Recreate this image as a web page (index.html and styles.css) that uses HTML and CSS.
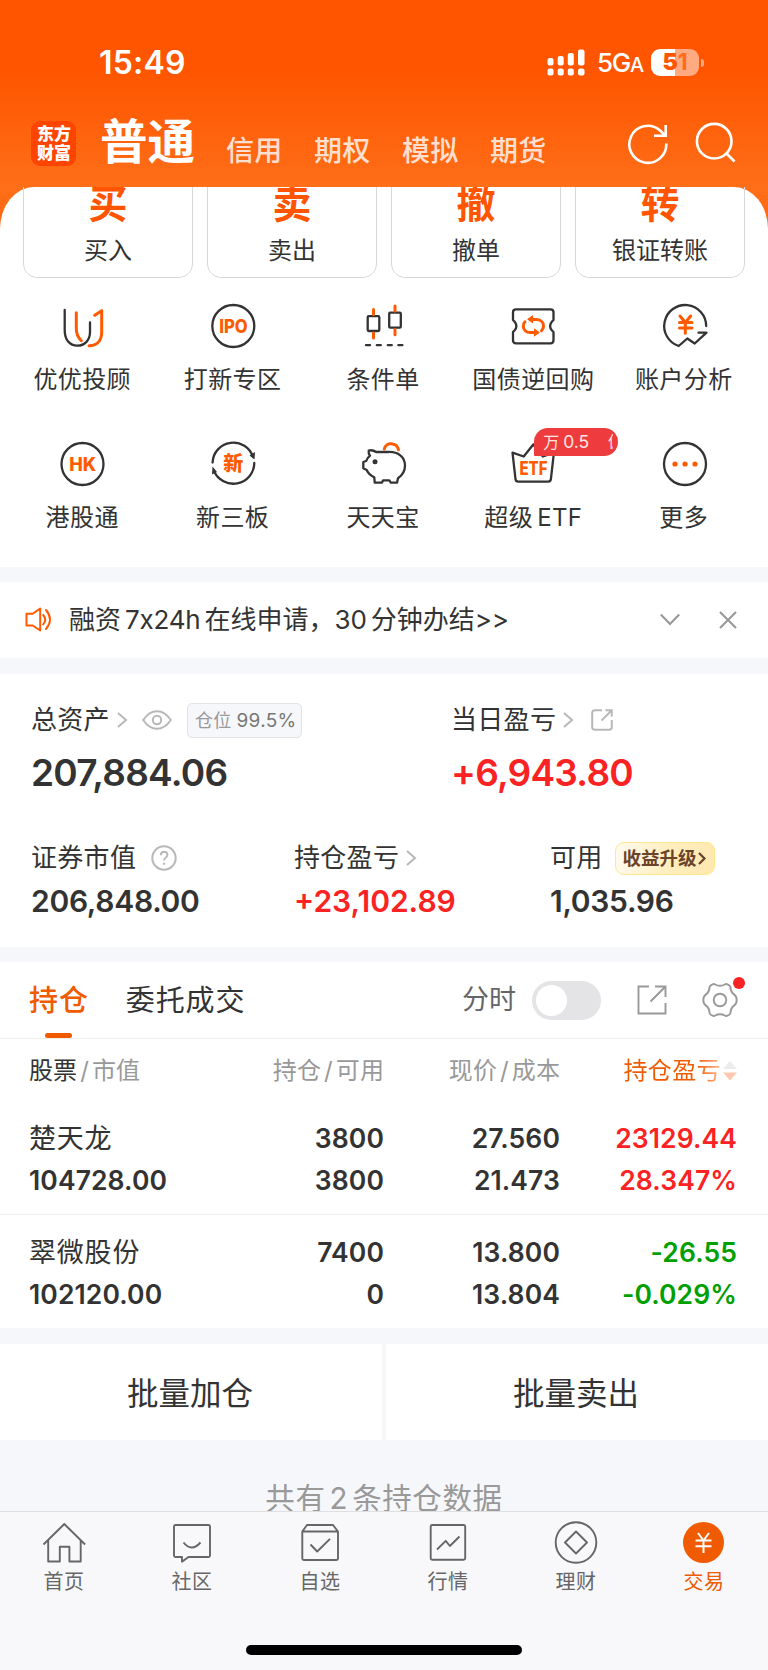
FILE: index.html
```html
<!DOCTYPE html>
<html lang="zh-CN">
<head>
    <meta charset="UTF-8">
    <meta name="viewport" content="width=device-width, initial-scale=1.0">
    <title>东方财富 - 交易</title>
    <link rel="stylesheet" href="styles.css">
</head>
<body>

<div class="app">
    <!-- Status bar and account tabs -->
    <header class="header">
        <div class="status">
            <span class="time">15:49</span>
            <svg class="signal" width="38" height="27" viewBox="0 0 38 27" fill="#fff">
                <rect x="0.5" y="9" width="6" height="7.500" rx="2"/><rect x="10.700" y="7" width="6" height="9.500" rx="2"/>
                <rect x="20.800" y="4" width="6" height="12.500" rx="2"/><rect x="31" y="0.500" width="6.500" height="16" rx="2"/>
                <rect x="0.500" y="19.500" width="6" height="7" rx="2"/><rect x="10.700" y="19.500" width="6" height="7" rx="2"/>
                <rect x="20.800" y="19.500" width="6" height="7" rx="2"/><rect x="31" y="19.500" width="6.500" height="7" rx="2"/>
            </svg>
            <span class="network">5G<small>A</small></span>
            <span class="battery"><b>5</b><i>1</i></span>
            <span class="battery-tip"></span>
        </div>
        <nav class="accounts">
            <div class="logo">东方<br>财富</div>
            <span class="account active">普通</span>
            <span class="account">信用</span>
            <span class="account">期权</span>
            <span class="account">模拟</span>
            <span class="account">期货</span>
            <svg class="refresh" width="42" height="42" viewBox="0 0 42 42" fill="none" stroke="#fff" stroke-width="2.600">
                <path d="M39.300 20.500A18.500 18.500 0 1 1 32.500 7L38 12.200M38.700 2v10.800H27"/>
            </svg>
            <svg class="search" width="42" height="42" viewBox="0 0 42 42" fill="none" stroke="#fff" stroke-width="2.600">
                <circle cx="19.200" cy="19.200" r="17.300"/><path d="M31 31l8.500 8.500"/>
            </svg>
        </nav>
    </header>

    <!-- Trade shortcuts -->
    <section class="panel">
        <div class="actions">
            <div class="action"><b>买</b><span>买入</span></div>
            <div class="action"><b>卖</b><span>卖出</span></div>
            <div class="action"><b>撤</b><span>撤单</span></div>
            <div class="action"><b>转</b><span>银证转账</span></div>
        </div>
        <div class="shortcuts">
            <div class="shortcut">
                <svg class="icon" viewBox="0 0 48 48">
                    <path d="M6.700 8v20c0 10 5 15.700 12.600 15.700S32 38 32 30V20.300"/>
                    <path class="hot" d="M18.300 10.700V26c0 6 1.500 9.500 5 12.700M36.700 13.300l7-4.600V30c0 9-5 13.700-12.700 13.700"/>
                </svg>
                <span>优优投顾</span>
            </div>
            <div class="shortcut">
                <svg class="icon" viewBox="0 0 48 48">
                    <circle cx="24.300" cy="24" r="21"/>
                    <text x="24.500" y="30.800" textLength="28.500" lengthAdjust="spacingAndGlyphs">IPO</text>
                </svg>
                <span>打新专区</span>
            </div>
            <div class="shortcut">
                <svg class="icon" viewBox="0 0 48 48">
                    <rect x="8.700" y="14.200" width="11.600" height="14.800" rx="1"/><rect x="30.200" y="10.700" width="11.600" height="15" rx="1"/>
                    <path class="hot" d="M14.500 7.500v5M14.500 31v5M36 4v5M36 27.800v5"/>
                    <path d="M7 43.200h4M17.800 43.200h4M28.800 43.200h4M39.400 43.200h4"/>
                </svg>
                <span>条件单</span>
            </div>
            <div class="shortcut">
                <svg class="icon" viewBox="0 0 48 48">
                    <path d="M7 7.300h34.500q3 0 3 3V18l-1.500 1.500q-3.800 4.500 0 9l1.500 1.500v8.300q0 3-3 3H7q-3 0-3-3V30l1.500-1.500q3.800-4.500 0-9L4 18v-7.700q0-3 3-3z"/>
                    <path class="hot" d="M22 17.500h5c4.500 0 7.500 2.800 7.500 6.500 0 2-.7 3.500-2 4.800M16 19.800c-1.200 1.200-1.700 2.700-1.700 4.500 0 3.700 3 6.200 7 6.200H27"/>
                    <path class="arrow" d="M18 17.300l6-4.300v8.600zM31 30.500l-6-4.300v8.600z"/>
                </svg>
                <span>国债逆回购</span>
            </div>
            <div class="shortcut">
                <svg class="icon" viewBox="0 0 48 48">
                    <path d="M46.200 24A21 21 0 1 0 18.700 44l8.600-7.500 7.400 5L46.500 30.700h-8"/>
                    <path class="hot" d="M20 14l5.300 6.500L30.700 14M19.500 20.600H32M19.500 26H32M25.300 20.500v10.800"/>
                </svg>
                <span>账户分析</span>
            </div>
            <div class="shortcut">
                <svg class="icon" viewBox="0 0 48 48">
                    <circle cx="24.500" cy="24" r="21"/>
                    <text x="24.700" y="30.800" textLength="27" lengthAdjust="spacingAndGlyphs">HK</text>
                </svg>
                <span>港股通</span>
            </div>
            <div class="shortcut">
                <svg class="icon" viewBox="0 0 48 48">
                    <path d="M3.600 22.500A20.700 20.700 0 0 1 44 17M45.300 23A21 21 0 0 1 5 31"/>
                    <path class="arrow-dark" d="M40.500 15.500l5 4 .5-7.500zM8 32l-5 2.500.5-8z"/>
                    <text x="24.300" y="31" class="cjk">新</text>
                </svg>
                <span>新三板</span>
            </div>
            <div class="shortcut">
                <svg class="icon" viewBox="0 0 48 48">
                    <path d="M4.300 22l2.900-1q1-3 3.800-5.300-1.800-2.200-1.300-5.200 4-.9 7.500 1.500h12C39 11.500 46 17 46 25.500c0 6-3 10-7 12.700l-.9 4.400h-6.300l-1.500-2.200H24l-1 2.200h-7.300l-.4-5.300C11.500 35.500 9 33 7.700 30l-3.400-1.700z"/>
                    <circle class="dot-dark" cx="16" cy="21.700" r="2.500"/>
                    <path class="hot" d="M25.300 9c1.500-7.500 12.500-6.500 14.200.8"/>
                </svg>
                <span>天天宝</span>
            </div>
            <div class="shortcut">
                <svg class="icon" viewBox="0 0 48 48">
                    <path d="M3.500 12.700l11.200 3.800 9.600-12 9.600 12 11-3.800-3 26.500q-.3 2.500-2.800 2.500H9.300q-2.500 0-2.800-2.500z"/>
                    <text x="24.500" y="35.300" textLength="28" lengthAdjust="spacingAndGlyphs">ETF</text>
                </svg>
                <span>超级<em>ETF</em></span>
                <div class="promo">万<em>0.5</em><i>佣</i></div>
            </div>
            <div class="shortcut">
                <svg class="icon" viewBox="0 0 48 48">
                    <circle cx="25" cy="24" r="21"/>
                    <g class="arrow"><circle cx="15" cy="24" r="2.600"/><circle cx="25" cy="24" r="2.600"/><circle cx="35" cy="24" r="2.600"/></g>
                </svg>
                <span>更多</span>
            </div>
        </div>
    </section>

    <!-- Notice -->
    <section class="notice">
        <svg class="speaker" width="30" height="30" viewBox="0 0 30 30" fill="none" stroke="#ff5a00" stroke-width="2" stroke-linejoin="round" stroke-linecap="round">
            <path d="M2.500 8.800h6.200L16.200 3.500v22l-7.500-5H2.500zM19.200 10q4 4.700 0 9.400M22 5q8 9.500 0 19"/>
        </svg>
        <p>融资<em>7x24h</em>在线申请，<em class="after">30</em>分钟办结&gt;&gt;</p>
        <svg class="down" width="20" height="14" viewBox="0 0 20 14" fill="none" stroke="#999" stroke-width="2.100"><path d="M.8 1.500L10 11 19.200 1.500"/></svg>
        <svg class="close" width="18" height="18" viewBox="0 0 18 18" fill="none" stroke="#999" stroke-width="2.100"><path d="M1 1l16 16M17 1L1 17"/></svg>
    </section>

    <!-- Assets -->
    <section class="assets">
        <div class="totals">
            <div class="total">
                <div class="label">总资产
                    <svg class="chevron" viewBox="0 0 10 16"><path d="M1 1l8 7-8 7"/></svg>
                    <svg class="eye" viewBox="0 0 30 20"><path d="M1.200 10Q7 1.200 15 1.200T28.800 10Q23 18.800 15 18.800T1.200 10z"/><circle cx="15" cy="10" r="4.200"/></svg>
                    <span class="ratio">仓位<em>99.5%</em></span>
                </div>
                <div class="amount">207,884.06</div>
            </div>
            <div class="total">
                <div class="label">当日盈亏
                    <svg class="chevron" viewBox="0 0 10 16"><path d="M1 1l8 7-8 7"/></svg>
                    <svg class="share" viewBox="0 0 22 22"><path d="M11 1.200H4Q1.200 1.200 1.200 4v14q0 2.800 2.800 2.800h14q2.800 0 2.800-2.800v-7M14.500 1.200h6.300v6.300M20.500 1.500L10.500 11.500"/></svg>
                </div>
                <div class="amount up">+6,943.80</div>
            </div>
        </div>
        <div class="details">
            <div class="detail">
                <div class="label">证券市值
                    <svg class="help" viewBox="0 0 26 26"><circle cx="13" cy="13" r="11.700"/><path d="M9.800 10.300q0-3.500 3.300-3.500t3.300 3q0 1.600-1.700 2.700-1.600 1.100-1.600 3"/><circle class="point" cx="13" cy="18.700" r="0.800"/></svg>
                </div>
                <div class="value">206,848.00</div>
            </div>
            <div class="detail">
                <div class="label">持仓盈亏
                    <svg class="chevron" viewBox="0 0 10 16"><path d="M1 1l8 7-8 7"/></svg>
                </div>
                <div class="value up">+23,102.89</div>
            </div>
            <div class="detail">
                <div class="label">可用
                    <span class="upgrade">收益升级<svg viewBox="0 0 8 13"><path d="M1 1l5.500 5.500L1 12"/></svg></span>
                </div>
                <div class="value">1,035.96</div>
            </div>
        </div>
    </section>

    <!-- Positions -->
    <section class="positions">
        <div class="tabs">
            <span class="tab active">持仓</span>
            <span class="tab">委托成交</span>
            <span class="minute">分时</span>
            <span class="toggle"></span>
            <svg class="export" width="30" height="30" viewBox="0 0 30 30" fill="none" stroke="#999" stroke-width="1.900"><path d="M12 1.500H1.500v27h27V18M18 1.500h10.500V12M28 2L13.500 16.500"/></svg>
            <div class="settings">
                <svg width="36" height="36" viewBox="0 0 36 36" fill="none" stroke="#999" stroke-width="1.900" stroke-linejoin="round">
                    <path d="M10.500 2.300q1.500-.8 2.700.2 4.800 2.600 9.600 0 1.200-1 2.700-.2 2.600 1.200 2.900 2.600.3 5.300 3.600 7.500 2.700 1.800 2.700 5.600t-2.700 5.600q-3.300 2.200-3.600 7.500-.3 1.400-2.900 2.600-1.500.8-2.700-.2-4.800-2.600-9.600 0-1.200 1-2.700.2-2.600-1.200-2.900-2.600-.3-5.300-3.600-7.500Q1.300 21.800 1.300 18T4 12.400q3.300-2.200 3.600-7.500.3-1.400 2.900-2.600z"/>
                    <circle cx="18" cy="18" r="6.300"/>
                </svg>
                <i class="dot"></i>
            </div>
        </div>
        <div class="row head">
            <div><b>股票</b><s>/</s>市值</div>
            <div>持仓<s>/</s>可用</div>
            <div>现价<s>/</s>成本</div>
            <div class="sort"><span>持仓盈亏</span><svg width="14" height="20" viewBox="0 0 14 20"><path d="M7 0l7 8H0z" fill="#ececec"/><path d="M0 11.500h14l-7 8z" fill="#ffc8ae"/></svg></div>
        </div>
        <div class="row">
            <div><span class="name">楚天龙</span><br>104728.00</div>
            <div>3800<br>3800</div>
            <div>27.560<br>21.473</div>
            <div class="up">23129.44<br>28.347%</div>
        </div>
        <div class="row">
            <div><span class="name">翠微股份</span><br>102120.00</div>
            <div>7400<br>0</div>
            <div>13.800<br>13.804</div>
            <div class="fall">-26.55<br>-0.029%</div>
        </div>
    </section>

    <div class="batch">
        <button type="button">批量加仓</button>
        <button type="button">批量卖出</button>
    </div>

    <p class="count">共有<em>2</em>条持仓数据</p>

    <!-- Bottom navigation -->
    <nav class="tabbar">
        <div class="item">
            <svg viewBox="0 0 44 44"><path d="M1.500 22.500L22.300 2l20.800 20.500M6.200 18.500v21h11.600V24.800h9.600v14.700h11.300v-21"/></svg>
            <span>首页</span>
        </div>
        <div class="item">
            <svg viewBox="0 0 44 44"><path d="M5.500 3h33q1.500 0 1.500 1.500v29q0 1.500-1.500 1.500H18.500l-6.500 4.800V35H5.500Q4 35 4 33.500v-29Q4 3 5.500 3zM13.500 20.500q8 10 17 0"/></svg>
            <span>社区</span>
        </div>
        <div class="item">
            <svg viewBox="0 0 44 44"><path d="M4.300 9.500L9 3h26l5 6.500v27q0 1.500-1.500 1.500H5.800q-1.500 0-1.500-1.500zM4.300 9.500H40M12.500 22.500l6.700 7L32 16.800"/></svg>
            <span>自选</span>
        </div>
        <div class="item">
            <svg viewBox="0 0 44 44"><rect x="4.700" y="3" width="34.500" height="34.700" rx="1.500"/><path d="M11 27.500l8.700-8.700 4.200 5.200 9.600-9.500"/></svg>
            <span>行情</span>
        </div>
        <div class="item">
            <svg viewBox="0 0 44 44"><circle cx="22" cy="20.500" r="20.300"/><path d="M22 9.500l11 11-11 11-11-11z"/></svg>
            <span>理财</span>
        </div>
        <div class="item active">
            <svg viewBox="0 0 44 44"><circle class="disc" cx="21.500" cy="20.500" r="20.500"/><path d="M16 11l5.500 7.500L27 11M13.500 18.500h16M13.500 24.300h16M21.500 18.500V31"/></svg>
            <span>交易</span>
        </div>
        <div class="home-indicator"></div>
    </nav>
</div>

</body>
</html>
```
FILE: styles.css
```css
* {
    box-sizing: border-box;
}

body {
    margin: 0;
    background: #f6f7fa;
    color: #333;
    font-family: Inter, "Noto Sans CJK SC", sans-serif;
}

svg {
    display: block;
    flex: none;
    overflow: visible;
}

em, i, s {
    font-style: normal;
    text-decoration: none;
}

p {
    margin: 0;
}

.app {
    display: flex;
    flex-direction: column;
    width: 768px;
    height: 1670px;
    overflow: hidden;
    background: linear-gradient(#ff5500 70px, #ff6e18 187px, #ff6410 240px, #f6f7fa 241px);
}

/* header */
.header {
    height: 187px;
    color: #fff;
}

.status {
    display: flex;
    align-items: center;
    height: 125px;
    padding: 0 64px 0 99px;
}

.time {
    margin-right: auto;
    font-size: 32px;
    font-weight: 600;
    letter-spacing: 0.2px;
}

.signal {
    margin-right: 12px;
}

.network {
    width: 54px;
    font-size: 26px;
    font-weight: 500;
    letter-spacing: -1.2px;
}

.network small {
    font-size: 20px;
}

.battery {
    width: 48px;
    height: 27px;
    border-radius: 9px;
    background: linear-gradient(90deg, #fff 51%, #ffaa80 51%);
    font-size: 23px;
    font-weight: 700;
    line-height: 27px;
    text-align: center;
    color: #ff5500;
}

.battery i {
    color: #ff6a1c;
}

.battery-tip {
    width: 3px;
    height: 8px;
    margin-left: 2px;
    border-radius: 0 4px 4px 0;
    background: #ffaa80;
}

.accounts {
    display: flex;
    height: 62px;
    padding-left: 31px;
}

.logo {
    width: 45px;
    height: 45px;
    margin: -4px 24px 0 0;
    padding: 4px 0 0 1px;
    border-radius: 9px;
    background: #ff4400;
    font-size: 17px;
    font-weight: 900;
    line-height: 18.500px;
    text-align: center;
}

.account {
    width: 88px;
    font-size: 28px;
    font-weight: 500;
    letter-spacing: 0.300px;
    line-height: 52px;
    color: #ffe0d0;
}

.account.active {
    width: 126px;
    font-size: 47.500px;
    font-weight: 700;
    letter-spacing: 0;
    line-height: 33px;
    color: #fff;
}

.refresh {
    margin: -2px 0 0 auto;
}

.search {
    margin: -3px 31px 0 26px;
}

/* shortcuts */
.panel {
    height: 380px;
    padding: 0 23px;
    border-radius: 34px 34px 0 0 / 42px 42px 0 0;
    background: #fff;
}

.actions {
    display: flex;
    gap: 14px;
    height: 91px;
    overflow: hidden;
}

.action {
    display: flex;
    flex-direction: column;
    flex: 1;
    align-items: center;
    height: 120px;
    margin-top: -29px;
    border: 1.500px solid #d8d8d8;
    border-radius: 14px;
    color: #333;
}

.action b {
    padding-top: 25px;
    font-size: 39px;
    font-weight: 700;
    line-height: 40px;
    color: #ff5500;
}

.action span {
    padding-top: 12px;
    font-size: 24px;
    line-height: 30px;
}

.shortcuts {
    display: grid;
    grid-template-columns: repeat(5, 150.400px);
    grid-auto-rows: 137.700px;
    margin: 24px -16px 0;
}

.shortcut {
    position: relative;
    display: flex;
    flex-direction: column;
    align-items: center;
}

.shortcut span {
    margin-top: 14px;
    font-size: 24px;
    letter-spacing: 0.400px;
    line-height: 32px;
}

.shortcut span em {
    margin-left: 4px;
}

.icon {
    width: 48px;
    height: 48px;
    fill: none;
    stroke: #333;
    stroke-width: 2.300;
    stroke-linecap: round;
    stroke-linejoin: round;
}

.icon .hot {
    stroke: #ff5a00;
    stroke-width: 3;
}

.icon .arrow {
    fill: #ff5a00;
    stroke: none;
}

.icon .arrow-dark, .icon .dot-dark {
    fill: #333;
    stroke: none;
}

.icon text {
    fill: #ff5a00;
    stroke: none;
    font-size: 18.500px;
    font-weight: 800;
    text-anchor: middle;
}

.icon .cjk {
    font-size: 20px;
}

.promo {
    position: absolute;
    top: -12px;
    left: 76px;
    display: flex;
    width: 84px;
    height: 28px;
    padding-left: 9px;
    border-radius: 15px 15px 15px 1px;
    background: #ee3b3d;
    font-size: 16px;
    line-height: 28px;
    color: #ffe6e0;
}

.promo em {
    margin-left: 4px;
    font-size: 17.500px;
}

.promo i {
    width: 5px;
    margin-left: 19px;
    overflow: hidden;
    font-size: 15px;
}

/* notice */
.notice {
    display: flex;
    align-items: center;
    height: 76px;
    margin-top: 15px;
    padding: 0 31px 0 24px;
    background: #fff;
}

.notice p {
    margin-left: 15px;
    font-size: 26px;
    line-height: 76px;
}

.notice em {
    margin: 0 4px;
    letter-spacing: -0.200px;
}

.notice em.after {
    margin-left: 0;
}

.down {
    margin-left: auto;
}

.close {
    margin-left: 39px;
}

/* assets */
.assets {
    height: 273px;
    margin-top: 16px;
    padding: 26px 31px 0;
    background: #fff;
}

.totals, .details {
    display: grid;
}

.totals {
    grid-template-columns: 420px 1fr;
}

.details {
    grid-template-columns: 263px 256px 1fr;
    margin-top: 33px;
}

.label {
    display: flex;
    align-items: center;
    height: 40px;
    font-size: 26px;
    letter-spacing: 0.300px;
    line-height: 40px;
}

.label svg {
    fill: none;
    stroke: #b8b8b8;
    stroke-width: 2;
}

.chevron {
    width: 10px;
    height: 16px;
    margin-left: 7px;
}

.eye {
    width: 30px;
    height: 20px;
    margin-left: 15px;
}

.ratio {
    width: 115px;
    height: 35px;
    margin-left: 15px;
    padding-left: 7px;
    border: 1.500px solid #e2e2e4;
    border-radius: 5px;
    background: #f6f7fa;
    font-size: 18px;
    line-height: 33px;
    white-space: nowrap;
    color: #999;
}

.ratio em {
    margin-left: 5px;
    font-size: 19px;
    color: #777;
}

.share {
    width: 22px;
    height: 22px;
    margin-left: 18px;
}

.help {
    width: 26px;
    height: 26px;
    margin-left: 15px;
}

.help .point {
    fill: #b8b8b8;
    stroke-width: 1;
}

.amount {
    height: 65px;
    font-size: 37px;
    font-weight: 600;
    letter-spacing: -0.750px;
    line-height: 66px;
}

.value {
    font-size: 30px;
    font-weight: 600;
    letter-spacing: -0.300px;
    line-height: 46px;
}

.value.up {
    letter-spacing: 0;
}

.up {
    color: #fa2222;
}

.fall {
    color: #00a000;
}

.upgrade {
    display: flex;
    align-items: center;
    width: 100px;
    height: 33px;
    margin-left: 12px;
    padding-left: 7px;
    border: 1.500px solid #ffe88a;
    border-radius: 9px 8px 9px 9px;
    background: linear-gradient(100deg, #fffaf0, #ffefc0 50%, #ffe8b0);
    font-size: 18.500px;
    font-weight: 700;
    letter-spacing: 0;
    line-height: 30px;
    color: #6b432a;
}

.upgrade svg {
    width: 8px;
    height: 13px;
    margin-left: 1px;
    stroke: #6b432a;
    stroke-width: 2.200;
}

/* positions */
.positions {
    margin-top: 15px;
    background: #fff;
}

.tabs {
    display: flex;
    align-items: center;
    height: 77px;
    padding: 0 30px 0 29px;
    border-bottom: 1px solid #eee;
}

.tab {
    display: flex;
    flex-direction: column;
    align-items: center;
    height: 76px;
    margin-right: 37px;
    font-size: 29px;
    letter-spacing: 0.900px;
    line-height: 78px;
}

.tab.active {
    font-weight: 500;
    color: #f05a00;
}

.tab.active::after {
    content: "";
    width: 27px;
    height: 5px;
    margin-top: -7px;
    border-radius: 3px;
    background: #f05a00;
}

.minute {
    margin-left: auto;
    font-size: 27px;
    line-height: 76px;
    color: #666;
}

.toggle {
    width: 69px;
    height: 39px;
    margin: 0 36px 0 16px;
    padding: 4px;
    border-radius: 20px;
    background: #e4e4e7;
}

.toggle::before {
    content: "";
    display: block;
    width: 31px;
    height: 31px;
    border-radius: 50%;
    background: #fff;
}

.settings {
    position: relative;
    margin-left: 35px;
}

.dot {
    position: absolute;
    top: -5px;
    right: -7px;
    width: 12px;
    height: 12px;
    border-radius: 50%;
    background: #fa2222;
}

.row {
    display: grid;
    grid-template-columns: 154px 201px 176px 177px;
    height: 113px;
    padding: 17px 30px 0 29px;
    font-size: 26.500px;
    font-weight: 600;
    letter-spacing: 0.100px;
    line-height: 41.600px;
    text-align: right;
}

.row + .row + .row {
    height: 114px;
    border-top: 1px solid #eee;
}

.row > div:first-child {
    text-align: left;
    white-space: nowrap;
}

.row .name {
    font-size: 27px;
    font-weight: 400;
    letter-spacing: 0.800px;
}

.row.head {
    height: 62px;
    padding-top: 0;
    font-size: 24px;
    font-weight: 400;
    line-height: 63px;
    color: #999;
}

.row.head b {
    font-weight: 400;
    color: #333;
}

.row.head s {
    margin: 0 3px;
}

.row .sort {
    display: flex;
    align-items: center;
    justify-content: flex-end;
    gap: 2px;
}

.sort span {
    letter-spacing: 0.400px;
    background: linear-gradient(90deg, #f05a00 75%, #ffb890);
    -webkit-background-clip: text;
    background-clip: text;
    color: transparent;
}

/* batch buttons */
.batch {
    display: grid;
    grid-template-columns: 382px 382px;
    gap: 4px;
    height: 96px;
    margin-top: 16px;
}

.batch button {
    padding: 0 2px 2px 0;
    border: none;
    background: #fff;
    font: 31.500px Inter, "Noto Sans CJK SC", sans-serif;
    color: #333;
}

.count {
    height: 71px;
    padding-top: 37px;
    overflow: hidden;
    font-size: 29.500px;
    letter-spacing: 0.600px;
    line-height: 42px;
    text-align: center;
    color: #999;
}

.count em {
    margin: 0 4px;
}

/* bottom navigation */
.tabbar {
    display: grid;
    grid-template-columns: repeat(6, 128px);
    grid-template-rows: 133px 10px;
    flex: 1;
    border-top: 1px solid #dfdfe2;
    background: #f8f8fb;
}

.item {
    display: flex;
    flex-direction: column;
    align-items: center;
    padding-top: 10px;
    font-size: 20px;
    letter-spacing: 0.500px;
    line-height: 30px;
    color: #666;
}

.item svg {
    width: 44px;
    height: 44px;
    margin-bottom: 1px;
    fill: none;
    stroke: #666;
    stroke-width: 1.900;
    stroke-linejoin: round;
}

.item.active {
    color: #f05a00;
}

.item.active svg {
    stroke: #fff;
    stroke-width: 2;
}

.item .disc {
    fill: #f05a00;
    stroke: none;
}

.home-indicator {
    grid-column: 1 / -1;
    justify-self: center;
    width: 276px;
    height: 10px;
    border-radius: 5px;
    background: #000;
}
```
